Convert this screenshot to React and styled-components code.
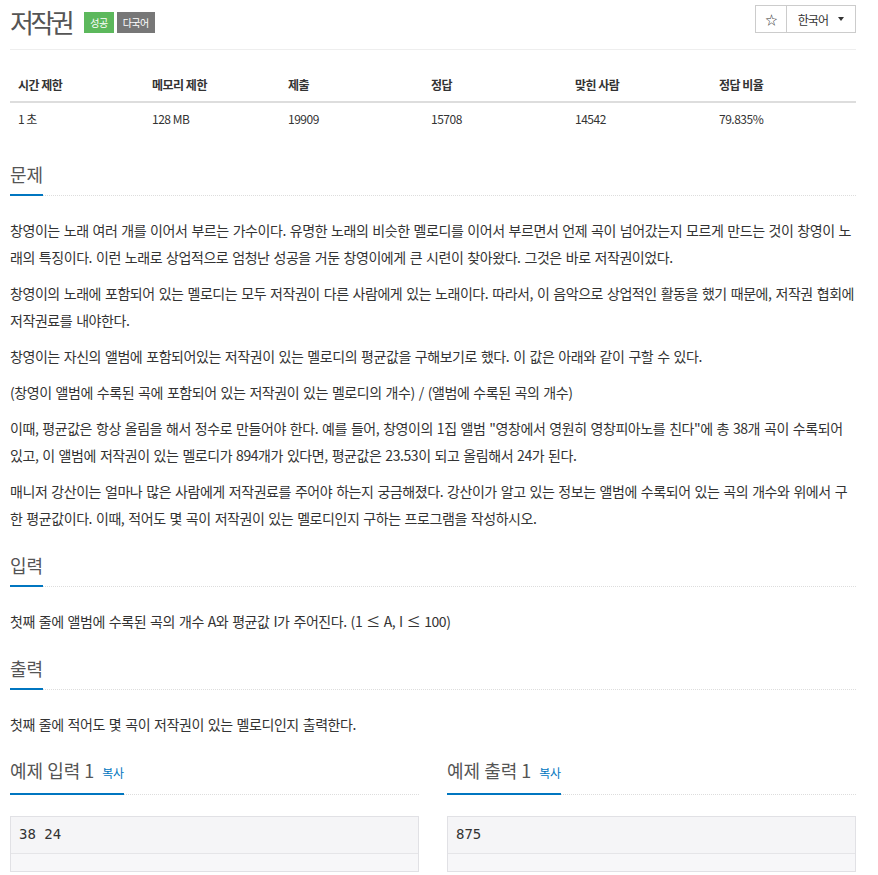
import React from "react";
import styled, { createGlobalStyle } from "styled-components";

const GlobalStyles = createGlobalStyle`
  body {
    margin: 0;
    background: #fff;
    font-family: "Noto Sans CJK KR", "Noto Sans", sans-serif;
    color: #333;
  }
`;

const stats = [
  { label: "시간 제한", value: "1 초", width: 134 },
  { label: "메모리 제한", value: "128 MB", width: 136 },
  { label: "제출", value: "19909", width: 143 },
  { label: "정답", value: "15708", width: 144 },
  { label: "맞힌 사람", value: "14542", width: 144 },
  { label: "정답 비율", value: "79.835%", width: 145 },
];

const App = () => {
  return (
    <Page>
      <GlobalStyles />
      <Header>
        <TitleRow>
          <Title>저작권</Title>
          <Badge color="#5cb85c">성공</Badge>
          <Badge color="#777">다국어</Badge>
        </TitleRow>
        <BtnGroup>
          <Btn narrow>☆</Btn>
          <Btn>
            한국어 <Caret />
          </Btn>
        </BtnGroup>
      </Header>

      <Table>
        <thead>
          <tr>
            {stats.map((s) => (
              <Th key={s.label} w={s.width}>
                {s.label}
              </Th>
            ))}
          </tr>
        </thead>
        <tbody>
          <tr>
            {stats.map((s) => (
              <Td key={s.label}>{s.value}</Td>
            ))}
          </tr>
        </tbody>
      </Table>

      <Section first>
        <Headline>
          <HeadText>문제</HeadText>
        </Headline>
        <Text>
          창영이는 노래 여러 개를 이어서 부르는 가수이다. 유명한 노래의 비슷한 멜로디를 이어서 부르면서 언제 곡이 넘어갔는지 모르게 만드는 것이 창영이 노래의 특징이다. 이런 노래로 상업적으로 엄청난 성공을 거둔 창영이에게 큰 시련이 찾아왔다. 그것은 바로 저작권이었다.
        </Text>
        <Text>
          창영이의 노래에 포함되어 있는 멜로디는 모두 저작권이 다른 사람에게 있는 노래이다. 따라서, 이 음악으로 상업적인 활동을 했기 때문에, 저작권 협회에 저작권료를 내야한다.
        </Text>
        <Text>
          창영이는 자신의 앨범에 포함되어있는 저작권이 있는 멜로디의 평균값을 구해보기로 했다. 이 값은 아래와 같이 구할 수 있다.
        </Text>
        <Text>(창영이 앨범에 수록된 곡에 포함되어 있는 저작권이 있는 멜로디의 개수) / (앨범에 수록된 곡의 개수)</Text>
        <Text>
          이때, 평균값은 항상 올림을 해서 정수로 만들어야 한다. 예를 들어, 창영이의 1집 앨범 "영창에서 영원히 영창피아노를 친다"에 총 38개 곡이 수록되어 있고, 이 앨범에 저작권이 있는 멜로디가 894개가 있다면, 평균값은 23.53이 되고 올림해서 24가 된다.
        </Text>
        <Text>
          매니저 강산이는 얼마나 많은 사람에게 저작권료를 주어야 하는지 궁금해졌다. 강산이가 알고 있는 정보는 앨범에 수록되어 있는 곡의 개수와 위에서 구한 평균값이다. 이때, 적어도 몇 곡이 저작권이 있는 멜로디인지 구하는 프로그램을 작성하시오.
        </Text>
      </Section>

      <Section>
        <Headline>
          <HeadText>입력</HeadText>
        </Headline>
        <Text>첫째 줄에 앨범에 수록된 곡의 개수 A와 평균값 I가 주어진다. (1 ≤ A, I ≤ 100)</Text>
      </Section>

      <Section>
        <Headline>
          <HeadText>출력</HeadText>
        </Headline>
        <Text>첫째 줄에 적어도 몇 곡이 저작권이 있는 멜로디인지 출력한다.</Text>
      </Section>

      <Samples>
        <div>
          <Headline>
            <HeadText>
              예제 입력 1<Copy>복사</Copy>
            </HeadText>
          </Headline>
          <Pre>
            <code>38 24</code>
            <Track />
          </Pre>
        </div>
        <div>
          <Headline>
            <HeadText>
              예제 출력 1<Copy>복사</Copy>
            </HeadText>
          </Headline>
          <Pre>
            <code>875</code>
            <Track />
          </Pre>
        </div>
      </Samples>
    </Page>
  );
};

const Page = styled.div`
  width: 846px;
  padding: 5px 22px 0 10px;
`;

const Header = styled.div`
  display: flex;
  justify-content: space-between;
  align-items: flex-start;
  padding-bottom: 10px;
  border-bottom: 1px solid #eee;
`;

const TitleRow = styled.div`
  display: flex;
  align-items: center;
  height: 34px;
`;

const Title = styled.h1`
  margin: 0 13px 0 0;
  font-size: 26px;
  font-weight: 400;
  letter-spacing: -3.5px;
  line-height: 34px;
  color: #555;
`;

const Badge = styled.span`
  display: inline-block;
  margin-right: 3px;
  padding: 0 6px;
  height: 21px;
  line-height: 21px;
  font-size: 10px;
  letter-spacing: -0.5px;
  color: #fff;
  background: ${(p) => p.color};
`;

const BtnGroup = styled.div`
  display: flex;
  border: 1px solid #ccc;
  height: 26px;
`;

const Btn = styled.div`
  display: flex;
  align-items: center;
  justify-content: center;
  gap: 8px;
  width: ${(p) => (p.narrow ? "30px" : "68px")};
  font-size: 12px;
  letter-spacing: -0.8px;
  color: #333;
  & + & {
    border-left: 1px solid #ccc;
  }
`;

const Caret = styled.span`
  display: inline-block;
  width: 0;
  height: 0;
  border-top: 4px solid #333;
  border-left: 3px solid transparent;
  border-right: 3px solid transparent;
  margin-left: 2px;
`;

const Table = styled.table`
  width: 846px;
  margin-top: 19px;
  border-collapse: collapse;
  table-layout: fixed;
  font-size: 12px;
  letter-spacing: -0.5px;
`;

const Th = styled.th`
  box-sizing: border-box;
  width: ${(p) => p.w}px;
  padding: 7px 8px;
  line-height: 18px;
  text-align: left;
  font-weight: 700;
  color: #333;
  border-bottom: 2px solid #ddd;
`;

const Td = styled.td`
  padding: 7px 8px;
  line-height: 18px;
  color: #333;
`;

const Section = styled.section`
  display: flex;
  flex-direction: column;
  margin-top: ${(p) => (p.first ? "25px" : "10px")};
`;

const Headline = styled.div`
  display: flex;
  align-items: flex-end;
  border-bottom: 1px dotted #ddd;
  margin-bottom: 21px;
`;

const HeadText = styled.h2`
  margin: 0 0 -1px;
  padding-bottom: 6px;
  font-size: 18px;
  font-weight: 400;
  line-height: 28px;
  letter-spacing: 0;
  color: #555;
  border-bottom: 2px solid #0076c0;
`;

const Copy = styled.span`
  font-size: 12px;
  letter-spacing: -0.3px;
  color: #0076c0;
  margin-left: 8px;
`;

const Text = styled.p`
  margin: 0 0 9px;
  font-size: 14px;
  line-height: 27px;
  letter-spacing: -0.43px;
  word-spacing: 1.2px;
  color: #333;
`;

const Samples = styled.div`
  display: grid;
  grid-template-columns: 409px 409px;
  column-gap: 28px;
  margin-top: 9px;
`;

const Pre = styled.pre`
  margin: 0;
  background: #f5f5f7;
  border: 1px solid #e1e1e5;
  font-family: "DejaVu Sans Mono", "Liberation Mono", monospace;
  font-size: 14px;
  color: #333;

  code {
    display: block;
    padding: 7px 8px 9px;
    line-height: 20px;
    white-space: pre;
  }
`;

const Track = styled.div`
  height: 17px;
  border-top: 1px solid #e5e5e8;
  background: #f7f7f9;
`;

export default App;
